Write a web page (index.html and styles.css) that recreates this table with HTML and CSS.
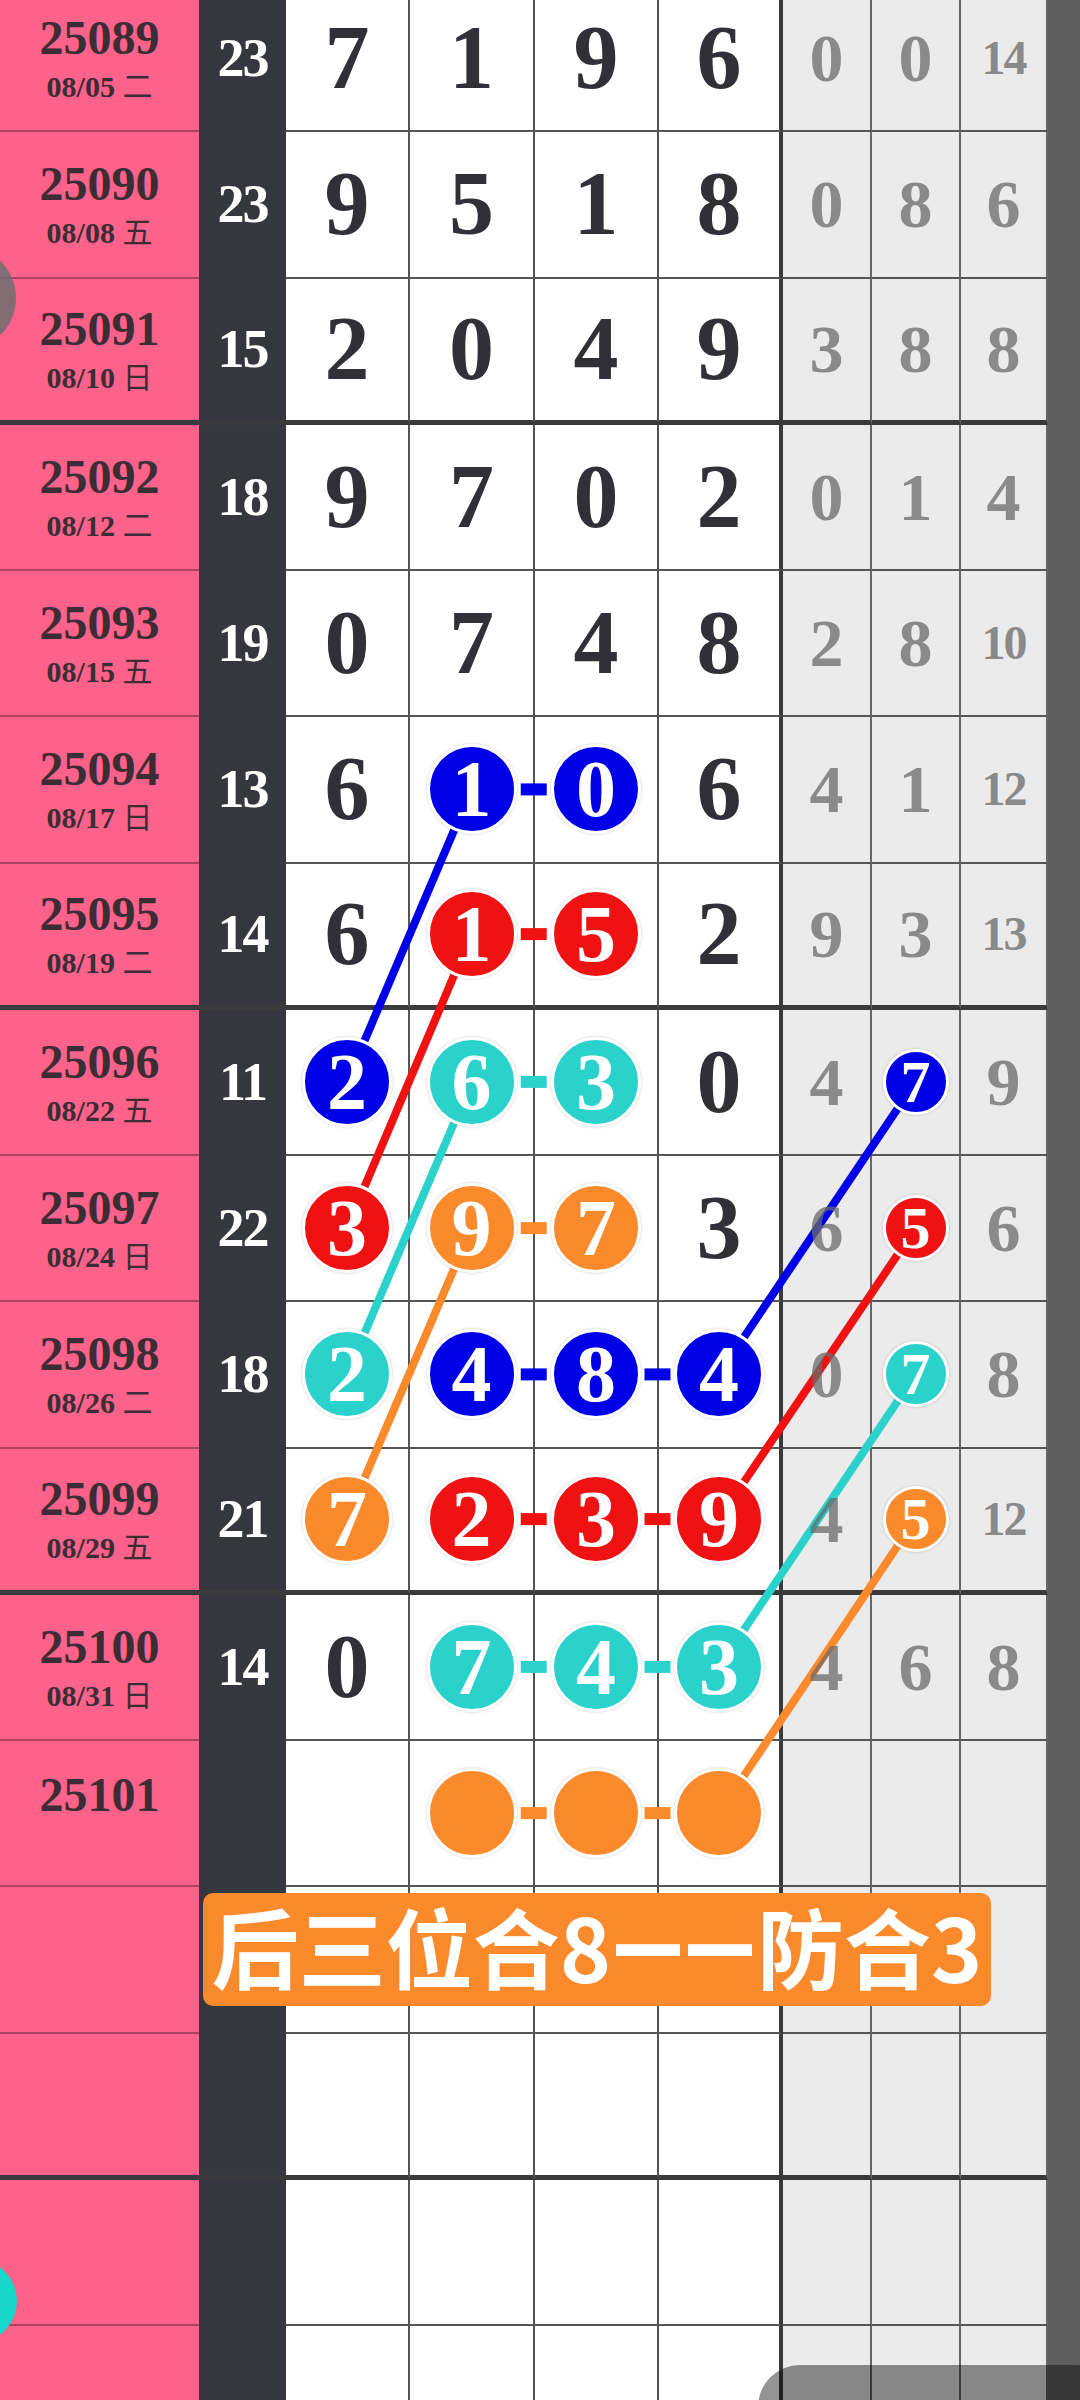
FILE: index.html
```html
<!DOCTYPE html>
<html>
<head>
    <title>走势图</title>
    <link rel="stylesheet" href="styles.css">
    <meta name="viewport" content="width=device-width, initial-scale=1" />
    <meta charset="UTF-8">
</head>
<body>
<div class="screen">
    <div class="board">
        <div class="row">
            <div class="issue"><b>25089</b><span class="date">08/05 <i>二</i></span></div>
            <div class="sum">23</div>
            <div class="d">7</div><div class="d">1</div><div class="d">9</div><div class="d last">6</div>
            <div class="m"><span>0</span></div><div class="m"><span>0</span></div><div class="m small"><span>14</span></div>
        </div>
        <div class="row">
            <div class="issue"><b>25090</b><span class="date">08/08 <i>五</i></span></div>
            <div class="sum">23</div>
            <div class="d">9</div><div class="d">5</div><div class="d">1</div><div class="d last">8</div>
            <div class="m"><span>0</span></div><div class="m"><span>8</span></div><div class="m"><span>6</span></div>
        </div>
        <div class="row end">
            <div class="issue"><b>25091</b><span class="date">08/10 <i>日</i></span></div>
            <div class="sum">15</div>
            <div class="d">2</div><div class="d">0</div><div class="d">4</div><div class="d last">9</div>
            <div class="m"><span>3</span></div><div class="m"><span>8</span></div><div class="m"><span>8</span></div>
        </div>
        <div class="row">
            <div class="issue"><b>25092</b><span class="date">08/12 <i>二</i></span></div>
            <div class="sum">18</div>
            <div class="d">9</div><div class="d">7</div><div class="d">0</div><div class="d last">2</div>
            <div class="m"><span>0</span></div><div class="m"><span>1</span></div><div class="m"><span>4</span></div>
        </div>
        <div class="row">
            <div class="issue"><b>25093</b><span class="date">08/15 <i>五</i></span></div>
            <div class="sum">19</div>
            <div class="d">0</div><div class="d">7</div><div class="d">4</div><div class="d last">8</div>
            <div class="m"><span>2</span></div><div class="m"><span>8</span></div><div class="m small"><span>10</span></div>
        </div>
        <div class="row">
            <div class="issue"><b>25094</b><span class="date">08/17 <i>日</i></span></div>
            <div class="sum">13</div>
            <div class="d">6</div>
            <div class="d"><span class="ball blue">1</span></div>
            <div class="d"><span class="ball blue">0</span></div>
            <div class="d last">6</div>
            <div class="m"><span>4</span></div><div class="m"><span>1</span></div><div class="m small"><span>12</span></div>
        </div>
        <div class="row end">
            <div class="issue"><b>25095</b><span class="date">08/19 <i>二</i></span></div>
            <div class="sum">14</div>
            <div class="d">6</div>
            <div class="d"><span class="ball red">1</span></div>
            <div class="d"><span class="ball red">5</span></div>
            <div class="d last">2</div>
            <div class="m"><span>9</span></div><div class="m"><span>3</span></div><div class="m small"><span>13</span></div>
        </div>
        <div class="row">
            <div class="issue"><b>25096</b><span class="date">08/22 <i>五</i></span></div>
            <div class="sum">11</div>
            <div class="d"><span class="ball blue">2</span></div>
            <div class="d"><span class="ball teal">6</span></div>
            <div class="d"><span class="ball teal">3</span></div>
            <div class="d last">0</div>
            <div class="m"><span>4</span></div>
            <div class="m"><span class="ball sm blue">7</span></div>
            <div class="m"><span>9</span></div>
        </div>
        <div class="row">
            <div class="issue"><b>25097</b><span class="date">08/24 <i>日</i></span></div>
            <div class="sum">22</div>
            <div class="d"><span class="ball red">3</span></div>
            <div class="d"><span class="ball orange">9</span></div>
            <div class="d"><span class="ball orange">7</span></div>
            <div class="d last">3</div>
            <div class="m"><span>6</span></div>
            <div class="m"><span class="ball sm red">5</span></div>
            <div class="m"><span>6</span></div>
        </div>
        <div class="row">
            <div class="issue"><b>25098</b><span class="date">08/26 <i>二</i></span></div>
            <div class="sum">18</div>
            <div class="d"><span class="ball teal">2</span></div>
            <div class="d"><span class="ball blue">4</span></div>
            <div class="d"><span class="ball blue">8</span></div>
            <div class="d last"><span class="ball blue">4</span></div>
            <div class="m"><span>0</span></div>
            <div class="m"><span class="ball sm teal">7</span></div>
            <div class="m"><span>8</span></div>
        </div>
        <div class="row end">
            <div class="issue"><b>25099</b><span class="date">08/29 <i>五</i></span></div>
            <div class="sum">21</div>
            <div class="d"><span class="ball orange">7</span></div>
            <div class="d"><span class="ball red">2</span></div>
            <div class="d"><span class="ball red">3</span></div>
            <div class="d last"><span class="ball red">9</span></div>
            <div class="m"><span>4</span></div>
            <div class="m"><span class="ball sm orange">5</span></div>
            <div class="m small"><span>12</span></div>
        </div>
        <div class="row">
            <div class="issue"><b>25100</b><span class="date">08/31 <i>日</i></span></div>
            <div class="sum">14</div>
            <div class="d">0</div>
            <div class="d"><span class="ball teal">7</span></div>
            <div class="d"><span class="ball teal">4</span></div>
            <div class="d last"><span class="ball teal">3</span></div>
            <div class="m"><span>4</span></div><div class="m"><span>6</span></div><div class="m"><span>8</span></div>
        </div>
        <div class="row">
            <div class="issue"><b>25101</b><span class="date">&nbsp;</span></div>
            <div class="sum"></div>
            <div class="d"></div>
            <div class="d"><span class="ball orange"></span></div>
            <div class="d"><span class="ball orange"></span></div>
            <div class="d last"><span class="ball orange"></span></div>
            <div class="m"></div><div class="m"></div><div class="m"></div>
        </div>
        <div class="row">
            <div class="issue"></div><div class="sum"></div>
            <div class="d"></div><div class="d"></div><div class="d"></div><div class="d last"></div>
            <div class="m"></div><div class="m"></div><div class="m"></div>
        </div>
        <div class="row end">
            <div class="issue"></div><div class="sum"></div>
            <div class="d"></div><div class="d"></div><div class="d"></div><div class="d last"></div>
            <div class="m"></div><div class="m"></div><div class="m"></div>
        </div>
        <div class="row">
            <div class="issue"></div><div class="sum"></div>
            <div class="d"></div><div class="d"></div><div class="d"></div><div class="d last"></div>
            <div class="m"></div><div class="m"></div><div class="m"></div>
        </div>
        <div class="row">
            <div class="issue"></div><div class="sum"></div>
            <div class="d"></div><div class="d"></div><div class="d"></div><div class="d last"></div>
            <div class="m"></div><div class="m"></div><div class="m"></div>
        </div>

        <!-- connecting lines, drawn under the balls -->
        <svg class="links" width="1048" height="2487" viewBox="0 0 1048 2487">
            <g stroke-width="8">
                <line x1="471.5" y1="803.4" x2="347" y2="1095.9" stroke="#0000e8"/>
                <line x1="471.5" y1="948.1" x2="347" y2="1242.1" stroke="#f01212"/>
                <line x1="471.5" y1="1095.9" x2="347" y2="1388.4" stroke="#2bd2cc"/>
                <line x1="471.5" y1="1242.1" x2="347" y2="1533.1" stroke="#fb8a2c"/>
                <line x1="719" y1="1388.4" x2="915.5" y2="1095.9" stroke="#0000e8"/>
                <line x1="719" y1="1533.1" x2="915.5" y2="1242.1" stroke="#f01212"/>
                <line x1="719" y1="1680.9" x2="915.5" y2="1388.4" stroke="#2bd2cc"/>
                <line x1="719" y1="1827.1" x2="915.5" y2="1533.1" stroke="#fb8a2c"/>
            </g>
            <g>
                <rect x="520.75" y="797.4" width="26" height="12" fill="#0000e8"/>
                <rect x="520.75" y="942.1" width="26" height="12" fill="#f01212"/>
                <rect x="520.75" y="1089.9" width="26" height="12" fill="#2bd2cc"/>
                <rect x="520.75" y="1236.1" width="26" height="12" fill="#fb8a2c"/>
                <rect x="520.75" y="1382.4" width="26" height="12" fill="#0000e8"/>
                <rect x="644.5" y="1382.4" width="26" height="12" fill="#0000e8"/>
                <rect x="520.75" y="1527.1" width="26" height="12" fill="#f01212"/>
                <rect x="644.5" y="1527.1" width="26" height="12" fill="#f01212"/>
                <rect x="520.75" y="1674.9" width="26" height="12" fill="#2bd2cc"/>
                <rect x="644.5" y="1674.9" width="26" height="12" fill="#2bd2cc"/>
                <rect x="520.75" y="1821.1" width="26" height="12" fill="#fb8a2c"/>
                <rect x="644.5" y="1821.1" width="26" height="12" fill="#fb8a2c"/>
            </g>
        </svg>

        <div class="banner">后三位合8<span class="dash">——</span>防合3</div>
    </div>
    <div class="edge"></div>

    <div class="float-btn"></div>
    <div class="float-dot"></div>
    <div class="bottom-bar"></div>
</div>
</body>
</html>
```

FILE: styles.css
```css
body {
    margin: 0;
    background-color: #fff;
    font-family: "Liberation Serif", "Noto Sans CJK SC", serif;
}

.screen {
    position: relative;
    width: 1080px;
    height: 2400px;
    overflow: hidden;
    display: flex;
}

.board {
    position: relative;
    flex: none;
    width: 1048px;
    margin-top: -14px;
}

.edge {
    flex: 1;
    background-color: #5d5d5d;
}

.row {
    display: grid;
    grid-template-columns: 199px 87px 124px 125px 124px 124px 89px 89px 87px;
    height: 146.25px;
}

.row > div {
    box-sizing: border-box;
    display: flex;
    align-items: center;
    justify-content: center;
    border-bottom: 2px solid #555;
    line-height: 1;
    font-weight: 700;
}

.row > .issue {
    border-bottom-color: #b13f5f;
}

.row > .sum {
    border-bottom-color: #36363f;
}

.row.end > div {
    border-bottom: 5px solid #3a3a3c;
}

/* issue number + date */
.issue {
    flex-direction: column;
    background-color: #fc628a;
    color: #3b2d33;
}

.issue b {
    font-size: 48px;
    line-height: 52px;
}

.issue .date {
    font-size: 30px;
    line-height: 34px;
    margin-top: 3px;
}

.issue .date i {
    font-style: normal;
    font-weight: 400;
    font-family: "Noto Sans CJK SC", sans-serif;
}

.sum {
    background-color: #36363f;
    color: #fff;
    font-size: 54px;
    letter-spacing: -2px;
}

.d {
    background-color: #fff;
    border-right: 2px solid #555;
    font-size: 90px;
    color: #303036;
}

.d.last {
    border-right: 4px solid #3a3a3c;
}

.m {
    background-color: #ebebeb;
    border-right: 2px solid #666;
    font-size: 68px;
    color: #6a6a6a;
}

.m > span {
    position: relative;
    z-index: 2;
    opacity: 0.75;
}

.m.small {
    font-size: 48px;
    letter-spacing: -2px;
}

/* balls */
.ball {
    position: relative;
    z-index: 2;
    box-sizing: content-box;
    width: 84px;
    height: 84px;
    border: 3px solid #fff;
    border-radius: 50%;
    display: flex;
    align-items: center;
    justify-content: center;
    font-size: 80px;
    color: #fff;
    box-shadow: 0 0 3px rgba(0, 0, 0, 0.2);
}

.m > .ball {
    opacity: 1;
}

.ball.sm {
    width: 60px;
    height: 60px;
    font-size: 60px;
}

.blue { background-color: #0000e8; }
.red { background-color: #f01212; }
.teal { background-color: #2bd2cc; }
.orange { background-color: #fb8a2c; }

.links {
    position: absolute;
    top: 0;
    left: 0;
    z-index: 1;
    pointer-events: none;
}

.banner {
    position: absolute;
    left: 203px;
    top: 1907px;
    z-index: 3;
    width: 788px;
    height: 113px;
    box-sizing: border-box;
    padding-bottom: 8px;
    border-radius: 10px;
    background-color: #fb8a2c;
    display: flex;
    align-items: center;
    justify-content: center;
    font-family: "Noto Sans CJK SC", sans-serif;
    font-weight: 700;
    font-size: 87px;
    line-height: 1;
    color: #fff;
    white-space: nowrap;
}

.banner .dash {
    font-family: "Liberation Sans", sans-serif;
    font-size: 58px;
    letter-spacing: 14px;
    margin: 0 -6px 0 8px;
    vertical-align: 17px;
    -webkit-text-stroke: 6px #fff;
}

/* floating bits on top of the page */
.float-btn {
    position: absolute;
    left: -88px;
    top: 246px;
    width: 104px;
    height: 104px;
    border-radius: 50%;
    background-color: rgba(110, 110, 110, 0.85);
}

.float-dot {
    position: absolute;
    left: -67px;
    top: 2259px;
    width: 84px;
    height: 84px;
    border-radius: 50%;
    background-color: #18d8cc;
}

.bottom-bar {
    position: absolute;
    left: 758px;
    top: 2365px;
    width: 360px;
    height: 120px;
    border-radius: 42px;
    background-color: rgba(0, 0, 0, 0.42);
}
```
